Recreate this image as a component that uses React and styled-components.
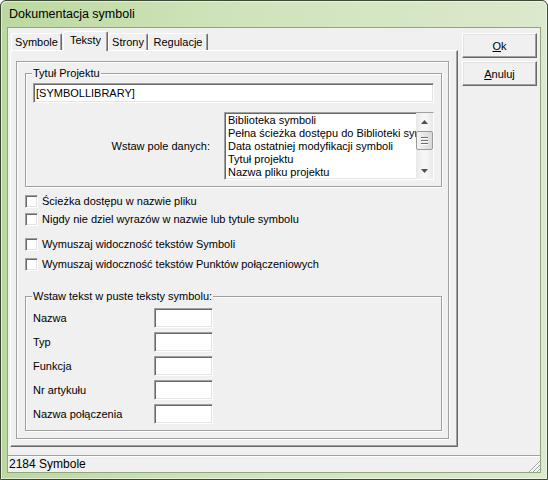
import React from "react";
import styled, { createGlobalStyle } from "styled-components";

const GlobalStyle = createGlobalStyle`
  html, body {
    margin: 0;
    padding: 0;
  }
  body {
    font-family: "Liberation Sans", Arial, sans-serif;
    font-size: 11px;
    color: #000;
    background: #fff;
  }
`;

// classic 3d borders
const sunken = `
  border: 1px solid;
  border-color: #a0a0a0 #fff #fff #a0a0a0;
  box-shadow: inset 1px 1px 0 #696969, inset -1px -1px 0 #e3e3e3;
`;

const Window = styled.div`
  box-sizing: border-box;
  width: 548px;
  height: 480px;
  display: flex;
  flex-direction: column;
  padding: 0 6px 6px;
  border: 1px solid #3b4834;
  border-radius: 6px 6px 0 0;
  background: linear-gradient(to right, #bcd8a0 0%, #cfe3ba 40%, #dbe9cc 100%);
  box-shadow: inset 1px 1px 0 rgba(255, 255, 255, 0.55),
    inset -1px -1px 0 rgba(255, 255, 255, 0.55);
`;

const TitleBar = styled.div`
  height: 26px;
  display: flex;
  align-items: center;
  padding-left: 2px;
  font-family: "Liberation Sans", Arial, sans-serif;
  font-size: 12.5px;
  color: #000;
`;

const Client = styled.div`
  flex: 1;
  min-height: 0;
  display: flex;
  flex-direction: column;
  background: #f0f0f0;
  border: 1px solid #8fa67f;
`;

const Main = styled.div`
  flex: 1;
  display: flex;
`;

const TabArea = styled.div`
  display: flex;
  flex-direction: column;
  margin-left: 2px;
  padding-top: 3px;
`;

const TabStrip = styled.div`
  position: relative;
  z-index: 1;
  height: 19px;
  display: flex;
  align-items: flex-end;
  padding-left: 1px;
`;

const Tab = styled.div`
  box-sizing: border-box;
  width: ${(p) => p.$w}px;
  height: ${(p) => (p.$active ? 20 : 17)}px;
  margin-bottom: ${(p) => (p.$active ? -1 : 0)}px;
  margin-left: ${(p) => p.$ml || 0}px;
  padding-top: 2px;
  text-align: center;
  line-height: 13px;
  white-space: nowrap;
  background: #f0f0f0;
  border: 1px solid;
  border-color: #fff #696969 transparent #fff;
  border-bottom: none;
  border-radius: 2px 2px 0 0;
  box-shadow: inset -1px 0 0 #a0a0a0;
`;

const Panel = styled.div`
  box-sizing: border-box;
  width: 448px;
  height: 397px;
  display: flex;
  padding: 10px 8px 7px 5px;
  border: 1px solid;
  border-color: #fff #696969 #696969 #fff;
  box-shadow: inset -1px -1px 0 #a0a0a0;
`;

const Etched = styled.div`
  flex: 1;
  display: flex;
  flex-direction: column;
  padding: 11px 0 0 8px;
  border: 1px solid #a0a0a0;
  box-shadow: inset 1px 1px 0 #fff, 1px 1px 0 #fff;
`;

const GroupBox = styled.div`
  position: relative;
  box-sizing: border-box;
  width: 417px;
  margin-top: ${(p) => p.$mt || 0}px;
  padding: 9px 7px 6px;
  padding-top: ${(p) => p.$pt}px;
  border: 1px solid #a0a0a0;
  box-shadow: inset 1px 1px 0 #fff, 1px 1px 0 #fff;
`;

const Legend = styled.span`
  position: absolute;
  top: -7px;
  left: 6px;
  padding: 0 1px;
  line-height: 13px;
  background: #f0f0f0;
  white-space: nowrap;
`;

const TextField = styled.input`
  box-sizing: border-box;
  display: block;
  width: ${(p) => (p.$w ? `${p.$w}px` : "100%")};
  height: 20px;
  margin: 0;
  padding: 0 2px;
  font: inherit;
  font-size: 11px;
  color: #000;
  background: #fff;
  outline: none;
  ${sunken}
`;

const ListRow = styled.div`
  display: flex;
  justify-content: flex-end;
  align-items: center;
  margin-top: 9px;
`;

const FieldLabel = styled.span`
  margin-right: 14px;
  line-height: 13px;
`;

const ListBox = styled.div`
  box-sizing: border-box;
  width: 210px;
  height: 68px;
  display: flex;
  background: #fff;
  ${sunken}
`;

const Items = styled.div`
  flex: 1;
  min-width: 0;
  overflow: hidden;
  padding: 1px 0 0 3px;
`;

const Item = styled.div`
  line-height: 13px;
  white-space: nowrap;
`;

const ScrollBar = styled.div`
  width: 17px;
  display: flex;
  flex-direction: column;
  background: linear-gradient(to right, #e8e8e8, #f6f6f6 40%, #f6f6f6 60%, #e8e8e8);
`;

const ArrowBtn = styled.div`
  height: 17px;
  display: flex;
  align-items: center;
  justify-content: center;
`;

const Thumb = styled.div`
  box-sizing: border-box;
  height: 19px;
  margin: 1px 0 0;
  display: flex;
  flex-direction: column;
  justify-content: center;
  align-items: center;
  gap: 2px;
  border: 1px solid #9a9a9a;
  border-radius: 2px;
  background: linear-gradient(to right, #f3f3f3, #e6e6e6 50%, #d8d8d8);
`;

const Grip = styled.span`
  width: 7px;
  height: 1px;
  background: #6f6f6f;
  box-shadow: 0 1px 0 #fff;
`;

const Track = styled.div`
  flex: 1;
`;

const CheckRow = styled.label`
  display: flex;
  align-items: center;
  height: 13px;
  margin-top: ${(p) => p.$mt}px;
  line-height: 13px;
  white-space: nowrap;
`;

const CheckBox = styled.input.attrs({ type: "checkbox" })`
  appearance: none;
  box-sizing: border-box;
  width: 13px;
  height: 13px;
  margin: 0 4px 0 0;
  background: #fff;
  ${sunken}
`;

const FieldRow = styled.div`
  display: flex;
  align-items: center;
  height: 20px;
  & + & {
    margin-top: 4px;
  }
`;

const RowLabel = styled.span`
  width: 121px;
  line-height: 13px;
  white-space: nowrap;
`;

const ButtonColumn = styled.div`
  display: flex;
  flex-direction: column;
  gap: 3px;
  margin-left: 4px;
  padding-top: 5px;
`;

const Button = styled.button`
  box-sizing: border-box;
  width: 75px;
  height: 25px;
  padding: 0;
  font: inherit;
  font-size: 11px;
  color: #000;
  background: #f0f0f0;
  border: 1px solid;
  border-color: #fff #696969 #696969 #fff;
  box-shadow: inset -1px -1px 0 #a0a0a0, inset 1px 1px 0 #e3e3e3;
  u {
    text-decoration: underline;
  }
`;

const StatusBar = styled.div`
  box-sizing: border-box;
  height: 17px;
  display: flex;
  justify-content: space-between;
  align-items: flex-end;
  border-top: 1px solid #a0a0a0;
  box-shadow: inset 0 1px 0 #fff;
`;

const StatusText = styled.span`
  align-self: center;
  padding-left: 1px;
  font-family: "Liberation Sans", Arial, sans-serif;
  font-size: 12px;
  line-height: 16px;
`;

const Arrow = ({ down }) => (
  <svg width="7" height="4" viewBox="0 0 7 4">
    <polygon
      points={down ? "0,0 7,0 3.5,4" : "0,4 7,4 3.5,0"}
      fill="#505050"
    />
  </svg>
);

const SizeGrip = () => (
  <svg width="12" height="12" viewBox="0 0 12 12">
    {[1, 5, 9].map((k) => (
      <g key={k}>
        <line x1={k} y1="12" x2="12" y2={k} stroke="#a0a0a0" />
        <line x1={k + 1} y1="12" x2="12" y2={k + 1} stroke="#fff" />
      </g>
    ))}
  </svg>
);

const tabs = [
  { label: "Symbole", w: 51 },
  { label: "Teksty", w: 45, ml: 1, active: true },
  { label: "Strony", w: 40 },
  { label: "Regulacje", w: 60 },
];

const listItems = [
  "Biblioteka symboli",
  "Pełna ścieżka dostępu do Biblioteki symboli",
  "Data ostatniej modyfikacji symboli",
  "Tytuł projektu",
  "Nazwa pliku projektu",
];

const checks = [
  { text: "Ścieżka dostępu w nazwie pliku", mt: 8 },
  { text: "Nigdy nie dziel wyrazów w nazwie lub tytule symbolu", mt: 5 },
  { text: "Wymuszaj widoczność tekstów Symboli", mt: 12 },
  { text: "Wymuszaj widoczność tekstów Punktów połączeniowych", mt: 7 },
];

const fields = ["Nazwa", "Typ", "Funkcja", "Nr artykułu", "Nazwa połączenia"];

export default function App() {
  return (
    <>
      <GlobalStyle />
      <Window>
        <TitleBar>Dokumentacja symboli</TitleBar>
        <Client>
          <Main>
            <TabArea>
              <TabStrip>
                {tabs.map((t) => (
                  <Tab key={t.label} $w={t.w} $ml={t.ml} $active={t.active}>
                    {t.label}
                  </Tab>
                ))}
              </TabStrip>
              <Panel>
                <Etched>
                  <GroupBox $pt={9}>
                    <Legend>Tytuł Projektu</Legend>
                    <TextField defaultValue="[SYMBOLLIBRARY]" />
                    <ListRow>
                      <FieldLabel>Wstaw pole danych:</FieldLabel>
                      <ListBox>
                        <Items>
                          {listItems.map((it) => (
                            <Item key={it}>{it}</Item>
                          ))}
                        </Items>
                        <ScrollBar>
                          <ArrowBtn>
                            <Arrow />
                          </ArrowBtn>
                          <Thumb>
                            <Grip />
                            <Grip />
                            <Grip />
                          </Thumb>
                          <Track />
                          <ArrowBtn>
                            <Arrow down />
                          </ArrowBtn>
                        </ScrollBar>
                      </ListBox>
                    </ListRow>
                  </GroupBox>

                  {checks.map((c) => (
                    <CheckRow key={c.text} $mt={c.mt}>
                      <CheckBox />
                      {c.text}
                    </CheckRow>
                  ))}

                  <GroupBox $mt={25} $pt={11}>
                    <Legend>Wstaw tekst w puste teksty symbolu:</Legend>
                    {fields.map((f) => (
                      <FieldRow key={f}>
                        <RowLabel>{f}</RowLabel>
                        <TextField $w={59} />
                      </FieldRow>
                    ))}
                  </GroupBox>
                </Etched>
              </Panel>
            </TabArea>
            <ButtonColumn>
              <Button>
                <u>O</u>k
              </Button>
              <Button>
                <u>A</u>nuluj
              </Button>
            </ButtonColumn>
          </Main>
          <StatusBar>
            <StatusText>2184 Symbole</StatusText>
            <SizeGrip />
          </StatusBar>
        </Client>
      </Window>
    </>
  );
}
